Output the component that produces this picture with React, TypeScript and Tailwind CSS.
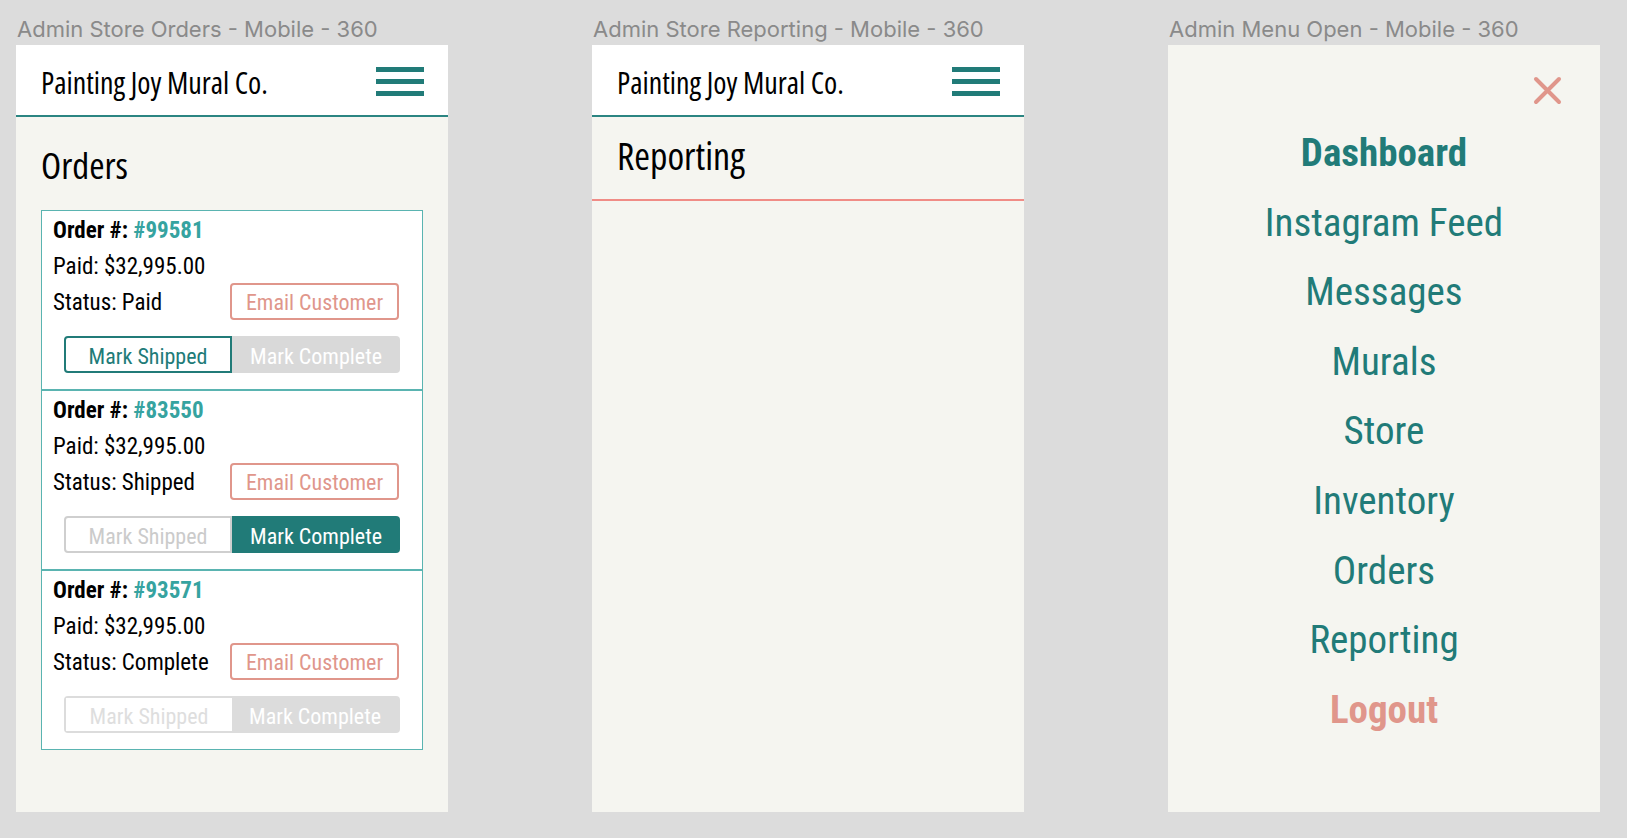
import React from "react";

type Order = { id: string; status: string; state: 0 | 1 | 2 };

const orders: Order[] = [
  { id: "#99581", status: "Paid", state: 0 },
  { id: "#83550", status: "Shipped", state: 1 },
  { id: "#93571", status: "Complete", state: 2 },
];

const BODY = "font-['Roboto',sans-serif] [font-stretch:75%]";
const HEAD = "font-['Open_Sans',sans-serif] [font-stretch:75%]";

function Label({ children }: { children: React.ReactNode }) {
  return (
    <div className="h-[45px] pt-[13px] pl-px leading-[32px] text-[22px] text-[#8a8a8a] font-['Inter',sans-serif] whitespace-nowrap">
      {children}
    </div>
  );
}

function Header() {
  return (
    <div className="h-[72px] bg-white border-b-2 border-[#2b8582] flex items-center justify-between pl-[25px] pr-[24px]">
      <div className={HEAD + " text-[30px] leading-[40px] mt-[6px] text-black whitespace-nowrap"}>
        Painting Joy Mural Co.
      </div>
      <div className="w-[48px] flex flex-col gap-[7px] mt-[3px]">
        <div className="h-[5px] bg-[#217b78]" />
        <div className="h-[5px] bg-[#217b78]" />
        <div className="h-[5px] bg-[#217b78]" />
      </div>
    </div>
  );
}

function Segmented({ state }: { state: 0 | 1 | 2 }) {
  if (state === 0) {
    return (
      <div className="mx-[11px] h-[37px] flex text-[22px]">
        <div className="w-1/2 border-2 border-[#217b78] rounded-l-[4px] bg-white flex items-center justify-center pt-[4px] text-[#217b78]">
          Mark Shipped
        </div>
        <div className="w-1/2 bg-[#d9d9d9] rounded-r-[4px] flex items-center justify-center pt-[4px] text-white">
          Mark Complete
        </div>
      </div>
    );
  }
  if (state === 1) {
    return (
      <div className="mx-[11px] h-[37px] flex text-[22px]">
        <div className="w-1/2 border-2 border-[#cfcfcf] rounded-l-[4px] bg-white flex items-center justify-center pt-[4px] text-[#cbcbcb]">
          Mark Shipped
        </div>
        <div className="w-1/2 bg-[#217b78] rounded-r-[4px] flex items-center justify-center pt-[4px] text-white">
          Mark Complete
        </div>
      </div>
    );
  }
  return (
    <div className="mx-[11px] h-[37px] flex text-[22px] border-2 border-[#dcdcdc] rounded-[4px]">
      <div className="w-1/2 bg-white flex items-center justify-center pt-[4px] text-[#dedede]">
        Mark Shipped
      </div>
      <div className="w-1/2 bg-[#dcdcdc] flex items-center justify-center pt-[4px] text-white">
        Mark Complete
      </div>
    </div>
  );
}

function OrderCard({ o }: { o: Order }) {
  return (
    <div className={BODY + " h-[180px] border border-[#5ab4b1] bg-white px-[11px] text-[23px] leading-[36px] text-black"}>
      <div className="h-[36px] pt-[2px] font-bold">
        Order #: <span className="text-[#36a3a0]">{o.id}</span>
      </div>
      <div className="h-[36px] pt-[2px]">Paid: $32,995.00</div>
      <div className="h-[36px] flex items-center justify-between">
        <span className="pt-[4px]">Status: {o.status}</span>
        <div className="w-[169px] h-[37px] mr-[12px] border-2 border-[#e0968b] rounded-[4px] flex items-center justify-center pt-[3px] text-[#e0968b] text-[22px]">
          Email Customer
        </div>
      </div>
      <div className="mt-[17px]">
        <Segmented state={o.state} />
      </div>
    </div>
  );
}

function OrdersFrame() {
  return (
    <div className="w-[432px] h-[767px] bg-[#f5f5f0]">
      <Header />
      <div className="px-[25px]">
        <div className={HEAD + " h-[93px] pt-[26px] text-[37px] leading-[44px] text-black"}>Orders</div>
        {orders.map((o) => (
          <OrderCard key={o.id} o={o} />
        ))}
      </div>
    </div>
  );
}

function ReportingFrame() {
  return (
    <div className="w-[432px] h-[767px] bg-[#f5f5f0]">
      <Header />
      <div className={HEAD + " h-[84px] border-b-2 border-[#f08c86] pl-[25px] pt-[16px] text-[38px] leading-[44px] text-black"}>
        Reporting
      </div>
    </div>
  );
}

function MenuFrame() {
  const items = ["Instagram Feed", "Messages", "Murals", "Store", "Inventory", "Orders", "Reporting"];
  return (
    <div className={BODY + " w-[432px] h-[767px] bg-[#f5f5f0] flex flex-col"}>
      <div className="flex justify-end pt-[31px] pr-[38px]">
        <svg width="29" height="29" viewBox="0 0 29 29">
          <path d="M3 3 L26 26 M26 3 L3 26" stroke="#e0968b" strokeWidth="4" strokeLinecap="round" />
        </svg>
      </div>
      <div className="mt-[14px] flex flex-col items-center text-[39px] leading-[69.6px]">
        <div className="font-bold text-[#217b78]">Dashboard</div>
        {items.map((i) => (
          <div key={i} className="text-[#217b78]">
            {i}
          </div>
        ))}
        <div className="font-bold text-[#e0968b]">Logout</div>
      </div>
    </div>
  );
}

export default function App() {
  return (
    <div className="w-[1627px] h-[838px] bg-[#dcdcdc] flex pl-[16px] gap-[144px] overflow-hidden">
      <div>
        <Label>Admin Store Orders - Mobile - 360</Label>
        <OrdersFrame />
      </div>
      <div>
        <Label>Admin Store Reporting - Mobile - 360</Label>
        <ReportingFrame />
      </div>
      <div>
        <Label>Admin Menu Open - Mobile - 360</Label>
        <MenuFrame />
      </div>
    </div>
  );
}
